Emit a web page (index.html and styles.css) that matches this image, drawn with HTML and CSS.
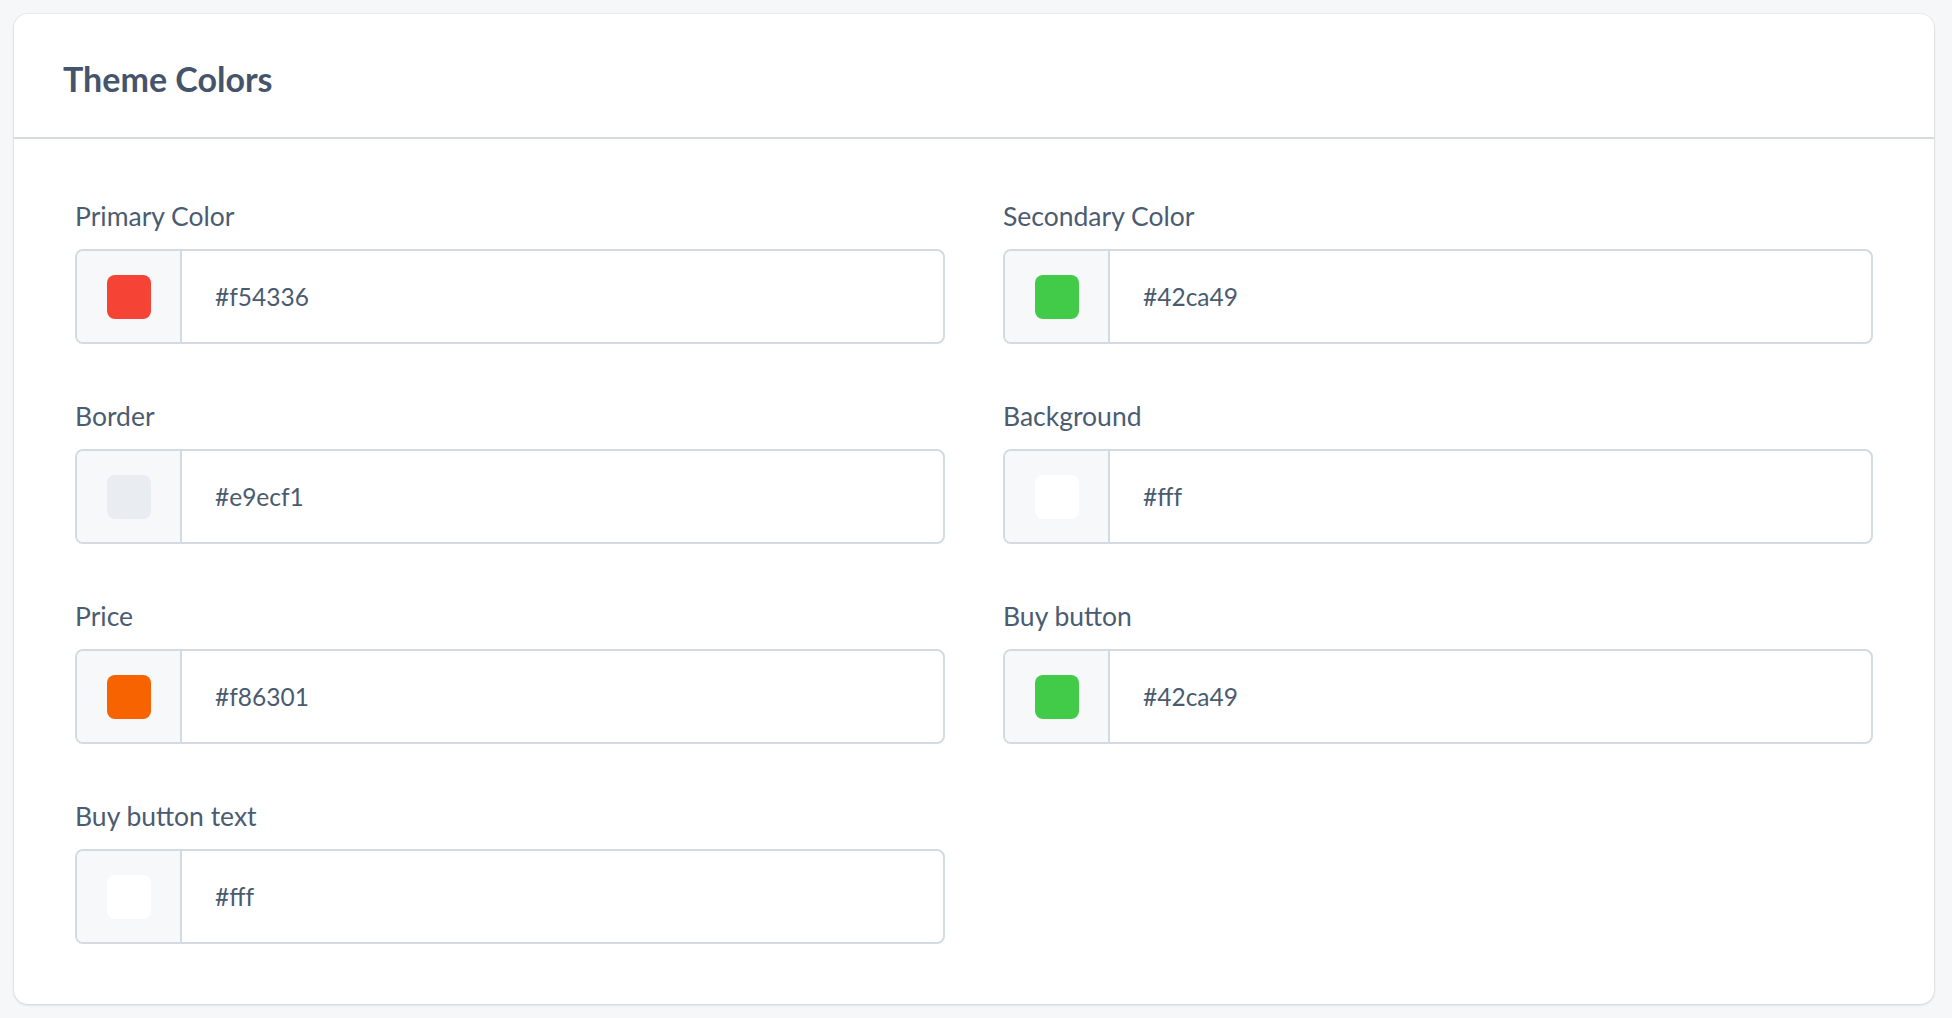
FILE: index.html
```html
<!DOCTYPE html>
<html>
<head>
<meta charset="utf-8">
<link rel="stylesheet" href="styles.css">
</head>
<body>
<div class="card">
  <div class="card-header"><h2 class="title">Theme Colors</h2></div>
  <div class="card-body">
    <div class="field">
      <label class="label">Primary Color</label>
      <div class="group"><div class="prefix"><span class="swatch" style="background:#f54336"></span></div><div class="value">#f54336</div></div>
    </div>
    <div class="field">
      <label class="label">Secondary Color</label>
      <div class="group"><div class="prefix"><span class="swatch" style="background:#42ca49"></span></div><div class="value">#42ca49</div></div>
    </div>
    <div class="field">
      <label class="label">Border</label>
      <div class="group"><div class="prefix"><span class="swatch" style="background:#e9ecf1"></span></div><div class="value">#e9ecf1</div></div>
    </div>
    <div class="field">
      <label class="label">Background</label>
      <div class="group"><div class="prefix"><span class="swatch" style="background:#fff"></span></div><div class="value">#fff</div></div>
    </div>
    <div class="field">
      <label class="label">Price</label>
      <div class="group"><div class="prefix"><span class="swatch" style="background:#f86301"></span></div><div class="value">#f86301</div></div>
    </div>
    <div class="field">
      <label class="label">Buy button</label>
      <div class="group"><div class="prefix"><span class="swatch" style="background:#42ca49"></span></div><div class="value">#42ca49</div></div>
    </div>
    <div class="field">
      <label class="label">Buy button text</label>
      <div class="group"><div class="prefix"><span class="swatch" style="background:#fff"></span></div><div class="value">#fff</div></div>
    </div>
  </div>
</div>
</body>
</html>
```
FILE: styles.css
```css
html, body {
  margin: 0;
  padding: 0;
  background: #f6f7f9;
}
body {
  font-family: Lato, "Noto Sans", sans-serif;
  color: #4a5b70;
  padding: 14px 18px 14px 14px;
}
.card {
  background: #fff;
  border-radius: 14px;
  box-shadow: 0 1px 3px rgba(0, 0, 0, 0.14), 0 0 0 1px rgba(0, 0, 0, 0.03);
  width: 1920px;
}
.card-header {
  border-bottom: 2px solid #d5dbe1;
  display: flex;
  align-items: center;
  padding-left: 49px;
  padding-top: 6px;
  box-sizing: border-box;
  height: 125px;
}
.title {
  margin: 0;
  font-size: 34px;
  font-weight: 700;
  color: #44556b;
}
.card-body {
  padding: 61px 61px 60px;
  display: grid;
  grid-template-columns: 1fr 1fr;
  column-gap: 58px;
  row-gap: 56px;
}
.label {
  display: block;
  font-size: 26.5px;
  line-height: 32px;
  margin-bottom: 17px;
  color: #4b5c71;
}
.group {
  display: flex;
  height: 95px;
  box-sizing: border-box;
  border: 2px solid #d4dae1;
  border-radius: 8px;
  overflow: hidden;
}
.prefix {
  width: 103px;
  border-right: 2px solid #d4dae1;
  background: #f7f8fa;
  display: flex;
  align-items: center;
  justify-content: center;
}
.swatch {
  width: 44px;
  height: 44px;
  border-radius: 8px;
}
.value {
  flex: 1;
  display: flex;
  align-items: center;
  padding-left: 33px;
  font-size: 24.5px;
  color: #4a5b70;
}
```
